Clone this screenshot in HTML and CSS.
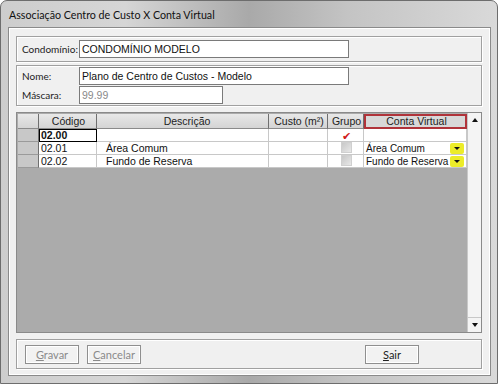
FILE: index.html
```html
<!DOCTYPE html>
<html lang="pt">
<head>
  <meta charset="UTF-8">
  <title>Associação Centro de Custo X Conta Virtual</title>
  <link rel="stylesheet" href="styles.css">
</head>
<body>
  <div class="window">
    <div class="titlebar">Associação Centro de Custo X Conta Virtual</div>
    <div class="client">
      <div class="panel panel-condominio">
        <label class="lbl">Condomínio:</label>
        <div class="field wide">CONDOMÍNIO MODELO</div>
      </div>

      <div class="panel panel-plano">
        <div class="line">
          <label class="lbl">Nome:</label>
          <div class="field wide">Plano de Centro de Custos - Modelo</div>
        </div>
        <div class="line">
          <label class="lbl">Máscara:</label>
          <div class="field short muted">99.99</div>
        </div>
      </div>

      <div class="grid">
        <div class="grid-body">
          <div class="row head">
            <div class="c ind"></div>
            <div class="c cod">Código</div>
            <div class="c desc">Descrição</div>
            <div class="c custo">Custo (m²)</div>
            <div class="c grupo">Grupo</div>
            <div class="c conta active">Conta Virtual</div>
          </div>
          <div class="row">
            <div class="c ind"></div>
            <div class="c cod focus"><b>02.00</b></div>
            <div class="c desc"></div>
            <div class="c custo"></div>
            <div class="c grupo"><span class="check on">&#10004;</span></div>
            <div class="c conta"></div>
          </div>
          <div class="row">
            <div class="c ind"></div>
            <div class="c cod">02.01</div>
            <div class="c desc">Área Comum</div>
            <div class="c custo"></div>
            <div class="c grupo"><span class="check"></span></div>
            <div class="c conta">Área Comum<span class="drop"></span></div>
          </div>
          <div class="row">
            <div class="c ind"></div>
            <div class="c cod">02.02</div>
            <div class="c desc">Fundo de Reserva</div>
            <div class="c custo"></div>
            <div class="c grupo"><span class="check"></span></div>
            <div class="c conta">Fundo de Reserva<span class="drop"></span></div>
          </div>
        </div>
        <div class="vscroll">
          <div class="sbtn up"></div>
          <div class="strack"></div>
          <div class="sbtn down"></div>
        </div>
      </div>

      <div class="panel buttons">
        <button class="btn" disabled><u>G</u>ravar</button>
        <button class="btn" disabled><u>C</u>ancelar</button>
        <span class="spacer"></span>
        <button class="btn sair"><u>S</u>air</button>
      </div>
    </div>
  </div>
</body>
</html>
```

FILE: styles.css
```css
body {
  margin: 0;
  background: #fff;
  font-family: "Liberation Sans", Arial, sans-serif;
  font-size: 10.5px;
  color: #111;
}
.window {
  width: 498px;
  height: 384px;
  box-sizing: border-box;
  border: 1px solid #6d6d6d;
  border-radius: 7px 7px 0 0;
  background: linear-gradient(90deg, #cdcdcd 0%, #d6d6d6 25%, #a9a9a9 50%, #c4c4c4 70%, #d9d9d9 100%);
  display: flex;
  flex-direction: column;
  padding: 0 6px 7px 7px;
}
.titlebar {
  height: 26px;
  line-height: 27px;
  font-family: Lato, sans-serif;
  font-size: 10.7px;
  color: #111;
  padding-left: 1px;
}
.client {
  flex: 1;
  background: #f0f0f0;
  border: 1px solid #8a8a8a;
  box-shadow: inset 0 0 0 1px #fff;
  display: flex;
  flex-direction: column;
  padding: 8px 8px 6px 7px;
  gap: 3px;
}
.panel {
  border: 1px solid #a0a0a0;
  box-shadow: inset 1px 1px 0 #fff, 1px 1px 0 #fff;
  background: #f0f0f0;
}
.panel-condominio {
  height: 26px;
  box-sizing: border-box;
  display: flex;
  align-items: center;
  padding-left: 5px;
}
.panel-plano {
  height: 41px;
  box-sizing: border-box;
  display: flex;
  flex-direction: column;
  justify-content: center;
  gap: 1px;
  padding-left: 5px;
}
.line {
  display: flex;
  align-items: center;
}
.lbl {
  width: 57px;
  flex-shrink: 0;
  color: #222;
  font-family: Lato, sans-serif;
  font-size: 10px;
}
.field {
  height: 18px;
  box-sizing: border-box;
  border: 1px solid #7a7a7a;
  background: #fff;
  line-height: 16px;
  padding-left: 2px;
}
.wide { width: 270px; }
.short { width: 144px; }
.muted { color: #8a8a8a; }

.grid {
  flex: 1;
  display: flex;
  border: 1px solid #8a8a8a;
  margin-top: 3px;
  background: #ababab;
}
.grid-body {
  flex: 1;
  padding: 1px 0 0 1px;
}
.row {
  display: flex;
  height: 13px;
  line-height: 13px;
}
.row.head {
  height: 15px;
  line-height: 15px;
}
.c {
  box-sizing: border-box;
  background: #fff;
  border-right: 1px solid #c8c8c8;
  border-bottom: 1px solid #c8c8c8;
  padding-left: 2px;
  white-space: nowrap;
  position: relative;
}
.head .c {
  background: linear-gradient(#e8e8e8, #d4d4d4);
  border-right: 1px solid #6f6f6f;
  border-bottom: 1px solid #8a8a8a;
  text-align: center;
  color: #222;
}
.ind {
  width: 21px;
  background: #c4c4c4;
  border-right: 1px solid #6f6f6f;
}
.row:not(.head) .ind {
  background: #c8c8c8;
  border-bottom: 1px solid #9a9a9a;
}
.cod { width: 58px; }
.desc { width: 172px; padding-left: 9px; }
.custo { width: 59px; }
.grupo { width: 36px; text-align: center; }
.conta { width: 103px; font-size: 10px; }
.head .conta.active {
  border: 2px solid #b0333a;
  background: #d8d8d8;
  line-height: 11px;
  font-size: 10.5px;
}
.focus {
  outline: 1px solid #000;
  outline-offset: -1px;
}
.check {
  display: inline-block;
  width: 9px;
  height: 9px;
  background: linear-gradient(135deg, #c8c8c8, #e8e8e8);
  border: 1px solid #d0d0d0;
  vertical-align: -1px;
}
.check.on {
  background: none;
  border: none;
  color: #d01a1a;
  font-size: 11px;
  line-height: 9px;
  width: auto;
  height: auto;
}
.drop {
  position: absolute;
  right: 2px;
  top: 1px;
  width: 14px;
  height: 11px;
  background: #ecec28;
  border-radius: 2px;
}
.drop::after {
  content: "";
  position: absolute;
  left: 4px;
  top: 4px;
  border-left: 3px solid transparent;
  border-right: 3px solid transparent;
  border-top: 3px solid #111;
}
.vscroll {
  width: 15px;
  background: #f4f4f4;
  border-left: 1px solid #c8c8c8;
  display: flex;
  flex-direction: column;
}
.sbtn {
  height: 14px;
  position: relative;
}
.sbtn::after {
  content: "";
  position: absolute;
  left: 4px;
  top: 5px;
  border-left: 3px solid transparent;
  border-right: 3px solid transparent;
}
.sbtn.up::after { border-bottom: 4px solid #111; }
.sbtn.down { border-top: 1px solid #c8c8c8; }
.sbtn.down::after { border-top: 4px solid #111; }
.strack { flex: 1; }

.buttons {
  height: 30px;
  box-sizing: border-box;
  margin-top: 3px;
  display: flex;
  align-items: center;
  gap: 8px;
  padding: 0 62px 0 8px;
}
.spacer { flex: 1; }
.btn {
  width: 54px;
  height: 19px;
  padding: 0;
  font-family: Lato, sans-serif;
  font-size: 11px;
  color: #222;
  background: #f2f2f2;
  border: 1px solid #8f8f8f;
  box-shadow: inset 0 0 0 1px #fff;
}
.btn[disabled] { color: #8a8a8a; }
```
